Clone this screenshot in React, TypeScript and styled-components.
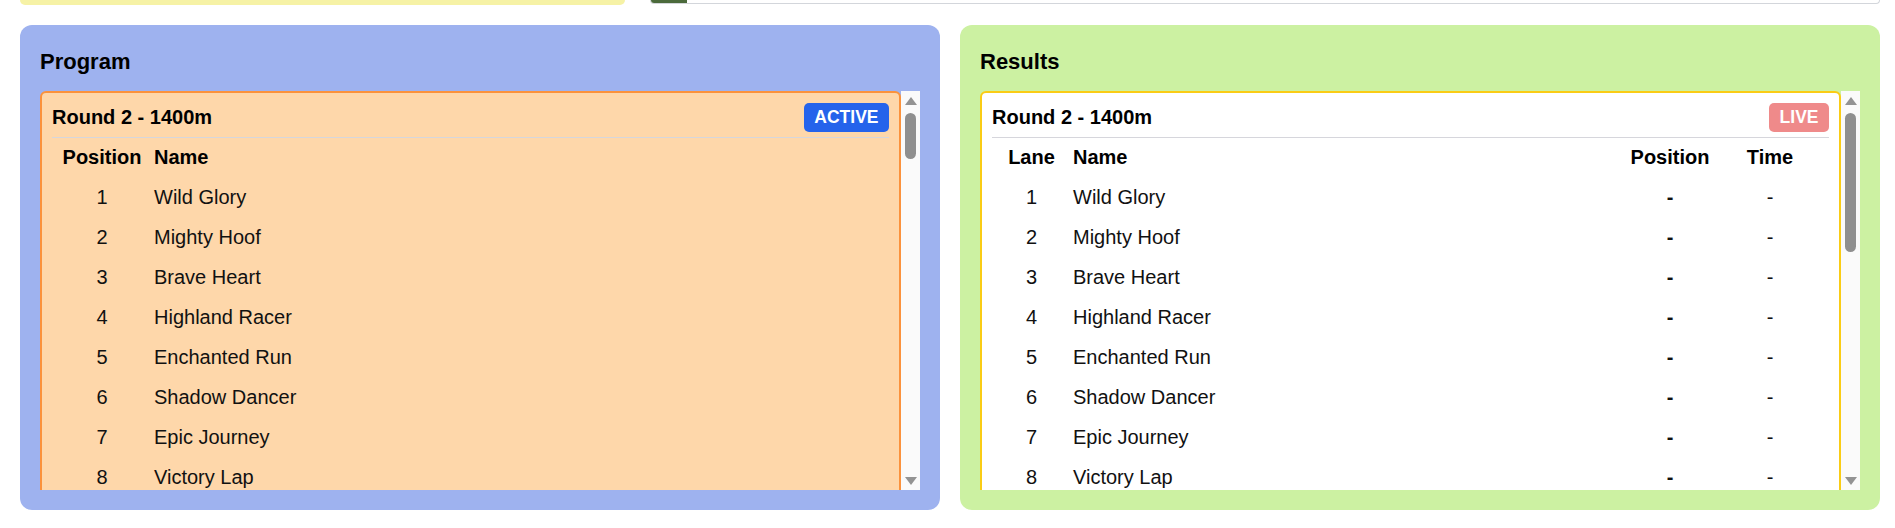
import React from 'react';
import styled, { createGlobalStyle } from 'styled-components';

const GlobalStyle = createGlobalStyle`
  html, body {
    margin: 0;
    padding: 0;
    background: #ffffff;
  }
  body {
    font-family: "Liberation Sans", Arial, Helvetica, sans-serif;
    color: #111111;
  }
  * { box-sizing: border-box; }
`;

const Page = styled.div`
  width: 1895px;
  height: 528px;
  overflow: hidden;
  padding: 0 15px 0 20px;
  display: flex;
  flex-direction: column;
  gap: 20px;
`;

const TopStrip = styled.div`
  display: grid;
  grid-template-columns: 605px 1fr;
  gap: 25px;
  height: 5px;
`;

const YellowBox = styled.div`
  background: #f6f2a6;
  border-radius: 0 0 10px 10px;
`;

const TrackBox = styled.div`
  height: 4px;
  background: #ffffff;
  border: 1px solid #d3d6db;
  border-top: none;
  border-radius: 0 0 8px 8px;
  display: flex;
  overflow: hidden;
`;

const TrackFill = styled.div`
  width: 36px;
  background: #4b6a3b;
`;

const Columns = styled.div`
  display: grid;
  grid-template-columns: 920px 920px;
  gap: 20px;
`;

const Panel = styled.section<{ $bg: string }>`
  background: ${p => p.$bg};
  border-radius: 12px;
  padding: 24px 20px 20px;
  display: flex;
  flex-direction: column;
`;

const PanelTitle = styled.h2`
  margin: 0 0 16px;
  font-size: 22px;
  font-weight: 700;
  line-height: normal;
  color: #000;
`;

const ScrollArea = styled.div`
  height: 399px;
  display: flex;
`;

const Viewport = styled.div`
  flex: 1;
  min-width: 0;
  overflow: hidden;
  display: flex;
  flex-direction: column;
  gap: 20px;
`;

const ScrollTrack = styled.div`
  flex: none;
  width: 19px;
  background: #fafafa;
  display: flex;
  flex-direction: column;
  align-items: center;
  padding: 6px 0 5px;
`;

const ArrowUp = styled.div`
  width: 0;
  height: 0;
  border-left: 6px solid transparent;
  border-right: 6px solid transparent;
  border-bottom: 8px solid #939393;
`;

const ArrowDown = styled.div`
  width: 0;
  height: 0;
  margin-top: auto;
  border-left: 6px solid transparent;
  border-right: 6px solid transparent;
  border-top: 8px solid #939393;
`;

const Thumb = styled.div`
  width: 11px;
  margin-top: 8px;
  border-radius: 6px;
  background: #8f8f8f;
`;

const Card = styled.div<{ $bg: string; $border: string }>`
  flex: none;
  background: ${p => p.$bg};
  border: 2px solid ${p => p.$border};
  border-radius: 6px;
  padding: 10px 10px 10px;
`;

const CardHeader = styled.div`
  display: flex;
  align-items: center;
  justify-content: space-between;
  padding-bottom: 5px;
  border-bottom: 1px solid #d6d6dc;
`;

const CardTitle = styled.h3`
  margin: 0;
  font-size: 20px;
  font-weight: 700;
  line-height: 23px;
  color: #000;
`;

const Badge = styled.span<{ $bg: string; $faded?: boolean }>`
  display: inline-block;
  background: ${p => p.$bg};
  color: #ffffff;
  font-size: 17.5px;
  font-weight: 700;
  line-height: 19px;
  padding: 5px 10.5px;
  border-radius: 5px;
  opacity: ${p => (p.$faded ? 0.6 : 1)};
`;

const Row = styled.div<{ $cols: string }>`
  display: grid;
  grid-template-columns: ${p => p.$cols};
  align-items: center;
  height: 39.9px;
  font-size: 20px;
  line-height: 23px;
  padding-right: 9px;
`;

const HeadRow = styled(Row)`
  font-weight: 700;
  color: #000;
`;

const Cell = styled.div<{ $align?: 'left' | 'center'; $bold?: boolean }>`
  text-align: ${p => p.$align ?? 'left'};
  padding-left: ${p => (p.$align === 'center' ? '0' : '2px')};
  font-weight: ${p => (p.$bold ? 700 : 'inherit')};
  white-space: nowrap;
`;

const horses = [
  'Wild Glory',
  'Mighty Hoof',
  'Brave Heart',
  'Highland Racer',
  'Enchanted Run',
  'Shadow Dancer',
  'Epic Journey',
  'Victory Lap',
];

const PROGRAM_COLS = '100px 1fr';
const RESULT_COLS = '79px 1fr 100px 100px';

const ScrollBar: React.FC<{ thumb: number }> = ({ thumb }) => (
  <ScrollTrack aria-hidden>
    <ArrowUp />
    <Thumb style={{ height: thumb }} />
    <ArrowDown />
  </ScrollTrack>
);

const ProgramCard: React.FC<{ round: number; distance: number; active: boolean; names: string[] }> = ({
  round,
  distance,
  active,
  names,
}) => (
  <Card $bg="#fed7aa" $border="#fb923c">
    <CardHeader>
      <CardTitle>
        Round {round} - {distance}m
      </CardTitle>
      {active && <Badge $bg="#2563eb">ACTIVE</Badge>}
    </CardHeader>
    <HeadRow $cols={PROGRAM_COLS}>
      <Cell $align="center">Position</Cell>
      <Cell>Name</Cell>
    </HeadRow>
    {names.map((n, i) => (
      <Row key={n} $cols={PROGRAM_COLS}>
        <Cell $align="center">{i + 1}</Cell>
        <Cell>{n}</Cell>
      </Row>
    ))}
  </Card>
);

type ResultRow = { lane: number; name: string; pos: string; time: string };

const ResultCard: React.FC<{ round: number; distance: number; live: boolean; rows: ResultRow[] }> = ({
  round,
  distance,
  live,
  rows,
}) => (
  <Card $bg="#ffffff" $border="#facc15">
    <CardHeader>
      <CardTitle>
        Round {round} - {distance}m
      </CardTitle>
      {live && (
        <Badge $bg="#e53e3e" $faded>
          LIVE
        </Badge>
      )}
    </CardHeader>
    <HeadRow $cols={RESULT_COLS}>
      <Cell $align="center">Lane</Cell>
      <Cell>Name</Cell>
      <Cell $align="center">Position</Cell>
      <Cell $align="center">Time</Cell>
    </HeadRow>
    {rows.map(r => (
      <Row key={r.lane} $cols={RESULT_COLS}>
        <Cell $align="center">{r.lane}</Cell>
        <Cell>{r.name}</Cell>
        <Cell $align="center" $bold>
          {r.pos}
        </Cell>
        <Cell $align="center">{r.time}</Cell>
      </Row>
    ))}
  </Card>
);

const liveRows: ResultRow[] = horses.map((n, i) => ({ lane: i + 1, name: n, pos: '-', time: '-' }));

export default function App() {
  return (
    <>
      <GlobalStyle />
      <Page>
        <TopStrip>
          <YellowBox />
          <TrackBox>
            <TrackFill />
          </TrackBox>
        </TopStrip>
        <Columns>
          <Panel $bg="#9eb2ef">
            <PanelTitle>Program</PanelTitle>
            <ScrollArea>
              <Viewport>
                <ProgramCard round={2} distance={1400} active names={horses} />
              </Viewport>
              <ScrollBar thumb={46} />
            </ScrollArea>
          </Panel>
          <Panel $bg="#ccf1a2">
            <PanelTitle>Results</PanelTitle>
            <ScrollArea>
              <Viewport>
                <ResultCard round={2} distance={1400} live rows={liveRows} />
              </Viewport>
              <ScrollBar thumb={139} />
            </ScrollArea>
          </Panel>
        </Columns>
      </Page>
    </>
  );
}
